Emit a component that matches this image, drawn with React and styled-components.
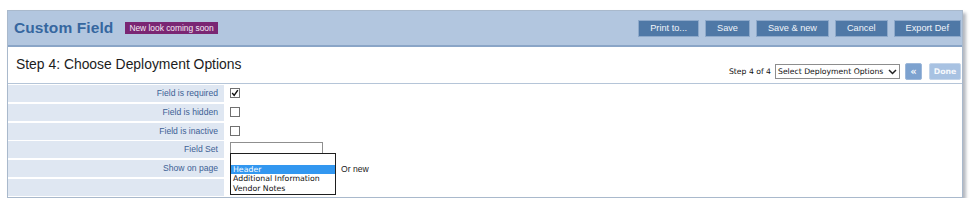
import React from 'react';
import styled, { createGlobalStyle } from 'styled-components';

const GlobalStyle = createGlobalStyle`
    body {
        margin: 0;
        background: #fff;
        font-family: "Liberation Sans", Arial, sans-serif;
    }
`;

const rows = [
    { label: 'Field is required', kind: 'check', checked: true },
    { label: 'Field is hidden', kind: 'check' },
    { label: 'Field is inactive', kind: 'check' },
    { label: 'Field Set', kind: 'fieldset' },
    { label: 'Show on page', kind: 'page' },
    { label: '', kind: 'empty' },
];

const buttons = ['Print to...', 'Save', 'Save & new', 'Cancel', 'Export Def'];

const App = () => {
    return (
        <Page>
            <GlobalStyle />
            <Frame>
                <Header>
                    <TitleBlock>
                        <Title>Custom Field</Title>
                        <Badge>New look coming soon</Badge>
                    </TitleBlock>
                    <ButtonBar>
                        {buttons.map((b) => (
                            <HeadButton key={b}>{b}</HeadButton>
                        ))}
                    </ButtonBar>
                </Header>

                <StepRow>
                    <StepTitle>Step 4: Choose Deployment Options</StepTitle>
                    <StepNav>
                        <StepCount>Step 4 of 4</StepCount>
                        <StepSelect>
                            <span>Select Deployment Options</span>
                            <svg width="9" height="6" viewBox="0 0 9 6">
                                <polyline points="1,1 4.5,4.5 8,1" fill="none" stroke="#222" strokeWidth="1.5" />
                            </svg>
                        </StepSelect>
                        <NavButton $w={17}>«</NavButton>
                        <NavButton $w={32} $light>Done</NavButton>
                    </StepNav>
                </StepRow>

                <Form>
                    {rows.map((r, i) => (
                        <Row key={i}>
                            <Label>{r.label}</Label>
                            <Value>
                                {r.kind === 'check' && (
                                    <Check>
                                        {r.checked && (
                                            <svg width="10" height="10" viewBox="0 0 10 10">
                                                <polyline points="1.5,5 4,8 8.5,1.5" fill="none" stroke="#111" strokeWidth="1.8" />
                                            </svg>
                                        )}
                                    </Check>
                                )}
                                {r.kind === 'fieldset' && (
                                    <FieldSetWrap>
                                        <TextInput />
                                        <ListBox>
                                            <Option />
                                            <Option $selected>Header</Option>
                                            <Option>Additional Information</Option>
                                            <Option>Vendor Notes</Option>
                                        </ListBox>
                                    </FieldSetWrap>
                                )}
                                {r.kind === 'page' && <OrNew>Or new</OrNew>}
                            </Value>
                        </Row>
                    ))}
                </Form>
            </Frame>
        </Page>
    );
};

const Page = styled.div`
    padding: 10px 0 0 7px;
`;

const Frame = styled.div`
    width: 954px;
    border: 1px solid #a9b9cc;
    box-shadow: 3px 3px 3px rgba(90, 100, 115, 0.45);
    background: #fff;
`;

const Header = styled.div`
    display: flex;
    align-items: center;
    justify-content: space-between;
    height: 34px;
    padding: 0 1px 0 6px;
    background: #b2c6df;
    border-bottom: 2px solid #8aa5c7;
`;

const TitleBlock = styled.div`
    display: flex;
    align-items: center;
`;

const Title = styled.h1`
    margin: 0;
    font-size: 15.5px;
    font-weight: bold;
    color: #36679f;
    letter-spacing: 0.1px;
`;

const Badge = styled.span`
    margin-left: 12px;
    padding: 1px 4px;
    background: #7a2673;
    color: #f4eaf3;
    font-size: 8.4px;
    line-height: 10px;
`;

const ButtonBar = styled.div`
    display: flex;
    gap: 6px;
`;

const HeadButton = styled.button`
    height: 17px;
    padding: 0 11px;
    border: 1px solid #8ea9ca;
    background: #4f78a6;
    color: #f1f5fa;
    font-family: "Liberation Sans", Arial, sans-serif;
    font-size: 9.2px;
    line-height: 15px;
    cursor: pointer;
`;

const StepRow = styled.div`
    display: flex;
    justify-content: space-between;
    align-items: flex-start;
    height: 36px;
    padding: 0 1px 0 8px;
    border-bottom: 1px solid #b5c5d8;
`;

const StepTitle = styled.div`
    padding-top: 9px;
    font-size: 13.9px;
    line-height: 16px;
    color: #1c1c1c;
`;

const StepNav = styled.div`
    display: flex;
    align-items: center;
    margin-top: 16px;
`;

const StepCount = styled.span`
    font-family: "DejaVu Sans", Verdana, sans-serif;
    font-size: 7.7px;
    color: #111;
    margin-right: 4px;
`;

const StepSelect = styled.div`
    display: flex;
    align-items: center;
    justify-content: space-between;
    box-sizing: border-box;
    width: 125px;
    height: 15px;
    padding: 0 2px 0 2px;
    border: 1px solid #8d8d8d;
    font-family: "DejaVu Sans", Verdana, sans-serif;
    font-size: 7.7px;
    color: #111;
    margin-right: 5px;
`;

const NavButton = styled.div`
    display: flex;
    align-items: center;
    justify-content: center;
    box-sizing: border-box;
    width: ${(p) => p.$w}px;
    height: 17px;
    margin-left: ${(p) => (p.$light ? 7 : 0)}px;
    border: 1px solid ${(p) => (p.$light ? '#c4d5ea' : '#9db8da')};
    border-radius: 2px;
    background: ${(p) => (p.$light ? '#a8c2e2' : '#7da2cf')};
    color: #f5f8fc;
    font-family: "DejaVu Sans", Verdana, sans-serif;
    font-size: ${(p) => (p.$light ? 7.8 : 10)}px;
    font-weight: bold;
`;

const Form = styled.div`
    display: flex;
    flex-direction: column;
`;

const Row = styled.div`
    display: grid;
    grid-template-columns: 216px 1fr;
    height: 18.8px;
`;

const Label = styled.div`
    box-sizing: border-box;
    height: 17px;
    margin-top: 1px;
    padding-right: 6px;
    background: #dfe7f2;
    color: #3d6195;
    font-size: 8.6px;
    line-height: 17px;
    text-align: right;
`;

const Value = styled.div`
    display: flex;
    align-items: center;
    padding-left: 6px;
    position: relative;
`;

const Check = styled.div`
    display: flex;
    align-items: center;
    justify-content: center;
    box-sizing: border-box;
    width: 10px;
    height: 10px;
    border: 1px solid #707070;
    background: #fff;
`;

const FieldSetWrap = styled.div`
    position: relative;
    width: 93px;
    height: 15px;
`;

const TextInput = styled.div`
    box-sizing: border-box;
    width: 93px;
    height: 15px;
    border: 1px solid #8f8f8f;
    background: #fff;
`;

const ListBox = styled.div`
    position: absolute;
    top: 11px;
    left: 0;
    z-index: 2;
    box-sizing: border-box;
    width: 106px;
    height: 42px;
    padding: 1px 0;
    border: 1.5px solid #1e1e1e;
    background: #fff;
`;

const Option = styled.div`
    height: 9.5px;
    padding-left: 2px;
    background: ${(p) => (p.$selected ? '#3297f0' : 'transparent')};
    color: ${(p) => (p.$selected ? '#fff' : '#111')};
    font-family: "DejaVu Sans", Verdana, sans-serif;
    font-size: 7.8px;
    line-height: 9.5px;
    white-space: nowrap;
`;

const OrNew = styled.span`
    margin-left: 111px;
    font-size: 8.6px;
    color: #1a1a1a;
`;

export default App;
